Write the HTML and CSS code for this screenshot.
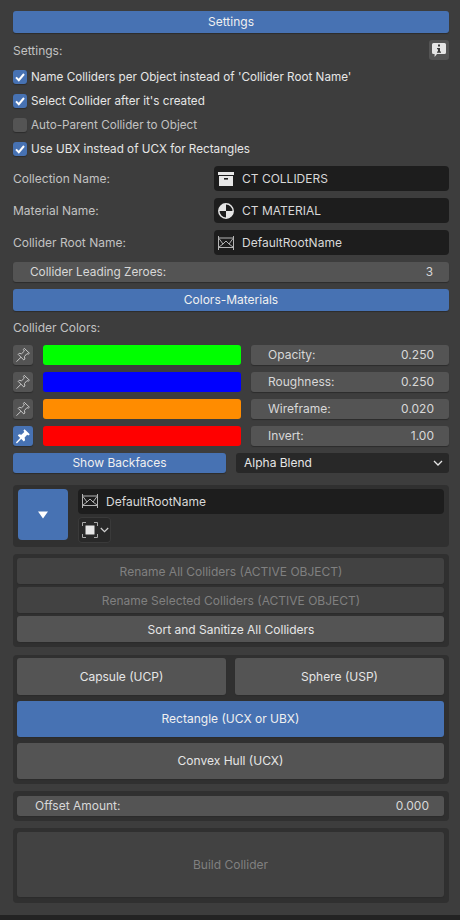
FILE: index.html
```html
<!DOCTYPE html>
<html lang="en">
<head>
  <meta charset="UTF-8">
  <meta name="viewport" content="width=device-width, initial-scale=1.0">
  <title>Collider Tools</title>
  <link rel="stylesheet" href="styles.css">
</head>
<body>
  <svg class="defs" width="0" height="0">
    <symbol id="ico-pin" viewBox="0 0 16 16">
      <path d="M9.6 1.6 14.4 6.2 13.2 7.2 12 6.6 9.4 9.6 9.9 12 8.8 13 3.2 7.4 4.2 6.3 6.5 6.8 9.4 4 8.6 2.8Z M5.800 10.400 1.800 14.400" fill="none" stroke="currentColor" stroke-width="1" stroke-linejoin="round" stroke-linecap="round"/>
    </symbol>
    <symbol id="ico-pin-on" viewBox="0 0 16 16">
      <path d="M9.6 1.2 14.8 6.2 13.4 7.4 12.2 6.8 9.6 9.6 10.1 12.2 8.8 13.4 2.8 7.4 4 6.2 6.4 6.7 9.3 4 8.4 2.6Z" fill="currentColor"/>
      <path d="M5.6 10.4 1.8 14.4" fill="none" stroke="currentColor" stroke-width="1.4" stroke-linecap="round"/>
    </symbol>
    <symbol id="ico-root" viewBox="0 0 16 14">
      <path d="M.5 0V14M15.500 0V14M1 2H15M1 11.500H15M1 2.500 5 8 8 5 11 8 15 2.500M1 11 5 8M15 11 11 8" fill="none" stroke="currentColor" stroke-width="1"/>
    </symbol>
  </svg>

  <div class="panel-root">
    <div class="btn btn-blue head-btn">Settings</div>

    <div class="label-row">
      <span class="label">Settings:</span>
      <div class="info-btn">
        <svg width="16" height="16" viewBox="0 0 16 16">
          <path d="M2.5 1H13.5Q15 1 15 2.5V10.5Q15 12 13.5 12H6L3.6 15V12H2.5Q1 12 1 10.5V2.5Q1 1 2.5 1Z" fill="#e6e6e6"/>
          <path d="M7 2.6H9V4.6H7ZM6 6H9V9.6H10V10.8H6V9.6H7V7.2H6Z" fill="#3a3a3a"/>
        </svg>
      </div>
    </div>

    <div class="check-list">
      <div class="check-row"><span class="check on"><svg width="14" height="14" viewBox="0 0 14 14"><path d="M3 7.4 5.8 10.2 11 4" fill="none" stroke="#fff" stroke-width="2"/></svg></span>Name Colliders per Object instead of 'Collider Root Name'</div>
      <div class="check-row"><span class="check on"><svg width="14" height="14" viewBox="0 0 14 14"><path d="M3 7.4 5.8 10.2 11 4" fill="none" stroke="#fff" stroke-width="2"/></svg></span>Select Collider after it's created</div>
      <div class="check-row muted"><span class="check"></span>Auto-Parent Collider to Object</div>
      <div class="check-row"><span class="check on"><svg width="14" height="14" viewBox="0 0 14 14"><path d="M3 7.4 5.8 10.2 11 4" fill="none" stroke="#fff" stroke-width="2"/></svg></span>Use UBX instead of UCX for Rectangles</div>
    </div>

    <div class="field-list">
      <div class="field-row">
        <span class="label">Collection Name:</span>
        <div class="field">
          <svg width="16" height="16" viewBox="0 0 16 16"><path d="M0 1H16V4H0ZM1 5H15V15H1Z" fill="#e6e6e6"/><path d="M6 7H10V8.6H6Z" fill="#1d1d1d"/></svg>
          CT COLLIDERS
        </div>
      </div>
      <div class="field-row">
        <span class="label">Material Name:</span>
        <div class="field">
          <svg width="16" height="16" viewBox="0 0 16 16"><circle cx="8" cy="8" r="7.200" fill="none" stroke="#e6e6e6" stroke-width="1.500"/><path d="M8 .8A7.2 7.2 0 0 0 .8 8H8ZM8 8H15.2A7.2 7.2 0 0 1 8 15.2Z" fill="#e6e6e6"/></svg>
          CT MATERIAL
        </div>
      </div>
      <div class="field-row">
        <span class="label">Collider Root Name:</span>
        <div class="field">
          <svg class="ico-grey" width="16" height="14"><use href="#ico-root"/></svg>
          DefaultRootName
        </div>
      </div>
    </div>

    <div class="slider zeroes"><span>Collider Leading Zeroes:</span><span>3</span></div>
    <div class="btn btn-blue colors-btn">Colors-Materials</div>
    <div class="label-row"><span class="label">Collider Colors:</span></div>

    <div class="color-list">
      <div class="color-row">
        <div class="pin"><svg width="16" height="16"><use href="#ico-pin"/></svg></div>
        <div class="swatch swatch-green"></div>
        <div class="slider prop"><span>Opacity:</span><span>0.250</span></div>
      </div>
      <div class="color-row">
        <div class="pin"><svg width="16" height="16"><use href="#ico-pin"/></svg></div>
        <div class="swatch swatch-blue"></div>
        <div class="slider prop"><span>Roughness:</span><span>0.250</span></div>
      </div>
      <div class="color-row">
        <div class="pin"><svg width="16" height="16"><use href="#ico-pin"/></svg></div>
        <div class="swatch swatch-orange"></div>
        <div class="slider prop"><span>Wireframe:</span><span>0.020</span></div>
      </div>
      <div class="color-row">
        <div class="pin pin-on"><svg width="16" height="16"><use href="#ico-pin-on"/></svg></div>
        <div class="swatch swatch-red"></div>
        <div class="slider prop"><span>Invert:</span><span>1.00</span></div>
      </div>
      <div class="blend-row">
        <div class="btn btn-blue">Show Backfaces</div>
        <div class="select">Alpha Blend
          <svg width="10" height="6" viewBox="0 0 10 6"><path d="M1 1 5 5 9 1" fill="none" stroke="#e6e6e6" stroke-width="1.3"/></svg>
        </div>
      </div>
    </div>

    <div class="box box-object">
      <div class="big-arrow"><svg width="12" height="8" viewBox="0 0 12 8"><path d="M1 .5H11L6 7.5Z" fill="#fff"/></svg></div>
      <div class="object-col">
        <div class="field field-wide">
          <svg class="ico-grey" width="16" height="14"><use href="#ico-root"/></svg>
          DefaultRootName
        </div>
        <div class="mode-btn">
          <svg width="16" height="16" viewBox="0 0 16 16"><path d="M.5 4V.5H4M12 .5H15.500V4M15.500 12V15.500H12M4 15.500H.5V12" fill="none" stroke="#a8a8a8" stroke-width="1"/><path d="M3.500 3.500H12.500V12.500H3.500Z" fill="#e6e6e6"/></svg>
          <svg width="9" height="6" viewBox="0 0 9 6"><path d="M.8 1 4.500 4.700 8.200 1" fill="none" stroke="#d0d0d0" stroke-width="1.200"/></svg>
        </div>
      </div>
    </div>

    <div class="box box-rename">
      <div class="btn btn-off rename-btn">Rename All Colliders (ACTIVE OBJECT)</div>
      <div class="btn btn-off rename-btn">Rename Selected Colliders (ACTIVE OBJECT)</div>
      <div class="btn rename-btn">Sort and Sanitize All Colliders</div>
    </div>

    <div class="box box-shapes">
      <div class="shape-row">
        <div class="btn shape-btn capsule-btn">Capsule (UCP)</div>
        <div class="btn shape-btn capsule-btn">Sphere (USP)</div>
      </div>
      <div class="btn btn-blue shape-btn">Rectangle (UCX or UBX)</div>
      <div class="btn shape-btn">Convex Hull (UCX)</div>
    </div>

    <div class="box box-offset">
      <div class="slider offset"><span>Offset Amount:</span><span>0.000</span></div>
    </div>

    <div class="box box-build">
      <div class="btn btn-off build-btn">Build Collider</div>
    </div>
  </div>
  <div class="bottom-strip"></div>
</body>
</html>
```

FILE: styles.css
```css
* {
  box-sizing: border-box;
}
html, body {
  height: 100%;
}
body {
  margin: 0;
  display: flex;
  flex-direction: column;
  overflow: hidden;
  background-color: #3d3d3d;
  color: #e6e6e6;
  font-family: Inter, "Noto Sans", sans-serif;
  font-size: 12px;
}
.defs {
  position: absolute;
}
.panel-root {
  flex: 1;
  padding: 11px 11px 0 13px;
}
.bottom-strip {
  height: 5px;
  background-color: #232323;
}

/* Buttons */
.btn {
  display: flex;
  align-items: center;
  justify-content: center;
  height: 20px;
  padding-bottom: 1px;
  border-radius: 3px;
  background-color: #545454;
  box-shadow: 0 1px 1px #2c2c2c;
}
.btn-blue {
  background-color: #4772b3;
  color: #f0f0f0;
}
.btn-off {
  background-color: #424242;
  color: #808080;
}
.head-btn, .colors-btn {
  height: 22px;
}

/* Labels */
.label-row {
  display: flex;
  align-items: center;
  justify-content: space-between;
  height: 20px;
  margin-top: 7px;
}
.label {
  color: #c2c2c2;
}
.colors-btn + .label-row {
  margin-top: 6px;
}
.info-btn {
  display: flex;
  align-items: center;
  justify-content: center;
  width: 20px;
  height: 20px;
  border-radius: 3px;
  background-color: #545454;
}

/* Checkboxes */
.check-list {
  margin-top: 5px;
}
.check-row {
  display: flex;
  align-items: center;
  gap: 4px;
  height: 24px;
  font-size: 11.7px;
}
.muted {
  color: #c2c2c2;
}
.check {
  width: 14px;
  height: 14px;
  border-radius: 3px;
  background-color: #545454;
  box-shadow: 0 1px 1px #2c2c2c;
}
.check.on {
  background-color: #4772b3;
}
.check svg {
  display: block;
}

/* Text fields */
.field-list {
  display: flex;
  flex-direction: column;
  gap: 7px;
  margin-top: 5px;
}
.field-row {
  display: grid;
  grid-template-columns: 201px 1fr;
  align-items: center;
}
.field {
  display: flex;
  align-items: center;
  gap: 8px;
  height: 25px;
  padding-left: 4px;
  border-radius: 4px;
  background-color: #1d1d1d;
  color: #d8d8d8;
}
.ico-grey {
  color: #b4b4b4;
}

/* Number sliders */
.slider {
  display: flex;
  align-items: center;
  justify-content: space-between;
  height: 20px;
  padding-bottom: 1px;
  border-radius: 3px;
  background-color: #545454;
  color: #d8d8d8;
  box-shadow: 0 1px 1px #2c2c2c;
}
.zeroes {
  margin-top: 7px;
  padding-left: 17px;
  padding-right: 16px;
  font-size: 11.8px;
}
.colors-btn {
  margin-top: 7px;
}
.prop {
  padding-left: 17px;
  padding-right: 15px;
}
.offset {
  padding-left: 18px;
  padding-right: 15px;
}

/* Colour rows */
.color-list {
  display: flex;
  flex-direction: column;
  gap: 7px;
  margin-top: 8px;
}
.color-row {
  display: grid;
  grid-template-columns: 20px 198px 198px;
  gap: 10px;
}
.pin {
  display: flex;
  align-items: center;
  justify-content: center;
  height: 20px;
  border-radius: 3px;
  background-color: #545454;
  color: #c8c8c8;
  box-shadow: 0 1px 1px #2c2c2c;
}
.pin-on {
  background-color: #4772b3;
  color: #fff;
}
.swatch {
  border-radius: 3px;
}
.swatch-green {
  background-color: #00ff00;
}
.swatch-blue {
  background-color: #0000ff;
}
.swatch-orange {
  background-color: #ff8c00;
}
.swatch-red {
  background-color: #ff0000;
}
.blend-row {
  display: grid;
  grid-template-columns: 213px 213px;
  gap: 10px;
}
.select {
  display: flex;
  align-items: center;
  justify-content: space-between;
  height: 20px;
  padding: 0 6px 1px 8px;
  border-radius: 3px;
  background-color: #282828;
  color: #e6e6e6;
}

/* Boxes */
.box {
  padding: 4px 5px 5px 4px;
  border-radius: 4px;
  background-color: #303030;
  margin-top: 7px;
}
.box-object {
  display: flex;
  gap: 10px;
  height: 62px;
  margin-top: 12px;
  padding-left: 5px;
}
.big-arrow {
  display: flex;
  align-items: center;
  justify-content: center;
  flex: none;
  width: 50px;
  height: 51px;
  border-radius: 4px;
  background-color: #4772b3;
}
.object-col {
  flex: 1;
}
.field-wide {
  padding-bottom: 1px;
}
.mode-btn {
  display: flex;
  align-items: center;
  gap: 2px;
  width: 33px;
  height: 26px;
  margin-top: 3px;
  padding-left: 4px;
  border-radius: 4px;
  background-color: #282828;
  box-shadow: inset 0 0 0 1px #3a3a3a;
}
.box-rename {
  display: flex;
  flex-direction: column;
  gap: 3px;
  height: 93px;
}
.rename-btn {
  height: 26px;
  flex: none;
  padding-bottom: 0;
  padding-left: 1px;
}
.box-shapes {
  display: flex;
  flex-direction: column;
  gap: 6px;
  height: 129px;
  margin-top: 8px;
  padding-top: 3px;
}
.shape-row {
  display: grid;
  grid-template-columns: 209px 209px;
  gap: 9px;
}
.shape-btn {
  height: 36px;
}
.capsule-btn {
  height: 37px;
}
.box-offset {
  height: 30px;
  padding-top: 5px;
}
.box-build {
  height: 75px;
}
.build-btn {
  height: 65px;
}
```
